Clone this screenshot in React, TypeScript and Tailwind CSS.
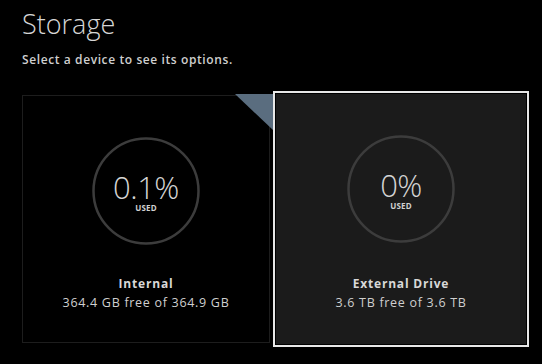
import React from "react";

function Ring({ value }: { value: string }) {
  return (
    <div className="relative w-[108px] h-[108px] flex flex-col items-center justify-center">
      <svg className="absolute inset-0" width="108" height="108" viewBox="0 0 108 108">
        <circle cx="54" cy="54" r="52.5" fill="none" stroke="#3c3c3c" strokeWidth="2.5" />
      </svg>
      <div className="text-[31px] leading-[31px] font-light text-[#d4d4d4] tracking-[-0.5px] mt-[1px]">{value}</div>
      <div className="text-[8px] leading-[8px] font-bold text-[#d0d0d0] mt-[1px] tracking-[0.2px]">USED</div>
    </div>
  );
}

export default function App() {
  return (
    <div
      className="w-[542px] h-[364px] bg-black overflow-hidden relative"
      style={{ fontFamily: '"Open Sans", "Noto Sans", sans-serif' }}
    >
      <div className="pl-[22px] pt-[6px]">
        <h1 className="text-[27px] font-light text-[#d6d6d6] leading-[36px]">Storage</h1>
        <p className="text-[12px] font-semibold text-[#cfcfcf] mt-[10px] leading-[16px] tracking-[0.6px]">
          Select a device to see its options.
        </p>
      </div>
      <div className="flex items-start pl-[22px] mt-[23px] relative">
        <div className="mt-[4px] w-[248px] h-[248px] border border-[#1d1d1d] bg-black flex flex-col items-center pt-[41px] shrink-0">
          <Ring value="0.1%" />
          <div className="mt-[31px] text-[12px] font-bold text-[#d8d8d8] leading-[16px] tracking-[0.8px]">Internal</div>
          <div className="mt-[4px] text-[12.5px] text-[#cfcfcf] leading-[14px] tracking-[0.7px]">364.4 GB free of 364.9 GB</div>
        </div>
        <div
          className="absolute left-[235px] top-[3px] w-[38px] h-[36px] bg-[#5a6d7f]"
          style={{ clipPath: "polygon(0 0, 100% 0, 100% 100%)" }}
        />
        <div className="relative ml-[3px] w-[256px] h-[256px] border-2 border-[#e8e8e8] bg-black p-[1px] shrink-0">
          <div className="w-full h-full bg-[#1b1b1b] flex flex-col items-center pt-[41px]">
            <Ring value="0%" />
            <div className="mt-[33px] text-[12px] font-bold text-[#d8d8d8] leading-[16px] tracking-[0.8px]">External Drive</div>
            <div className="mt-[4px] text-[12.5px] text-[#cfcfcf] leading-[14px] tracking-[0.7px]">3.6 TB free of 3.6 TB</div>
          </div>
        </div>
      </div>
    </div>
  );
}
